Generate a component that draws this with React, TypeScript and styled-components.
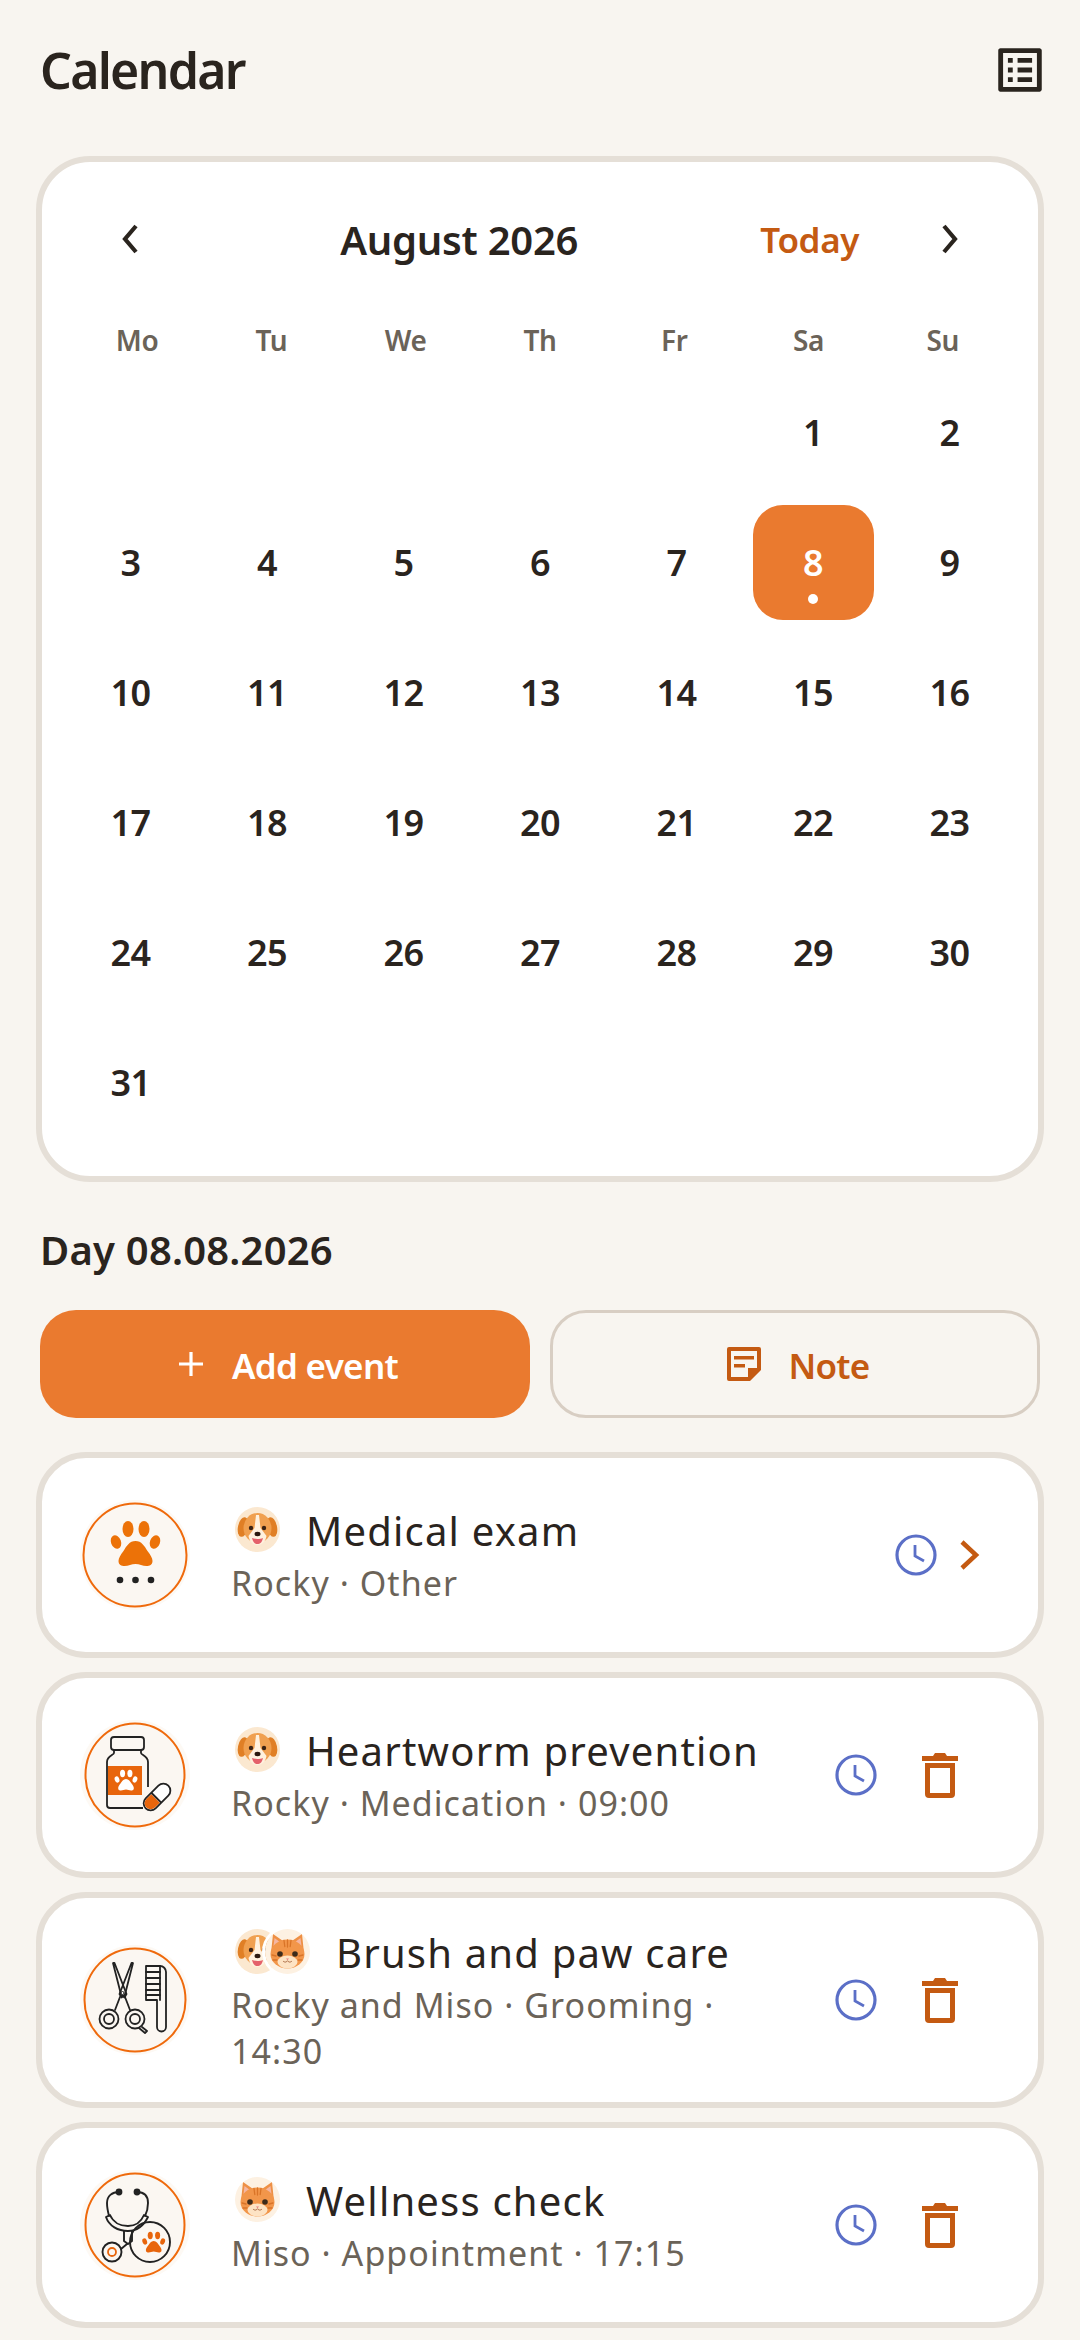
import React from 'react';
import styled, { createGlobalStyle } from 'styled-components';

const GlobalStyle = createGlobalStyle`
    html, body {
        margin: 0;
        padding: 0;
        background: #f8f5f0;
        font-family: "Noto Sans", sans-serif;
        color: #2a241e;
    }
    * {
        box-sizing: border-box;
    }
`;

const Page = styled.div`
    width: 1080px;
    height: 2340px;
    padding: 0 36px;
    overflow: hidden;
`;

const Header = styled.header`
    display: flex;
    justify-content: space-between;
    align-items: center;
    height: 140px;
    margin-bottom: 16px;
    padding: 0 0 0 4px;

    svg {
        margin-right: -5px;
    }
`;

const PageTitle = styled.h1`
    margin: 0;
    font-size: 50px;
    font-weight: 600;
    letter-spacing: -1.75px;
`;

const Card = styled.section`
    background: #fff;
    border: 6px solid #e5dfd7;
    border-radius: 54px;
    padding: 49px 28px 36px;
`;

const Nav = styled.div`
    display: flex;
    align-items: center;
    height: 56px;
    margin: 0 32px 53px;
`;

const IconButton = styled.button`
    display: flex;
    align-items: center;
    justify-content: center;
    width: 56px;
    height: 56px;
    padding: 0;
    border: 0;
    background: none;
`;

const Month = styled.div`
    flex: 1;
    text-align: center;
    font-size: 40px;
    font-weight: 600;
    letter-spacing: -0.25px;
`;

const Today = styled.span`
    margin-right: 63px;
    font-size: 35px;
    font-weight: 600;
    letter-spacing: -0.4px;
    color: #c45a12;
`;

const WeekRow = styled.div`
    display: grid;
    grid-template-columns: repeat(7, 1fr);
    height: 40px;
    margin-bottom: 15px;
`;

const WeekDay = styled.div`
    text-align: center;
    line-height: 40px;
    font-size: 28px;
    font-weight: 600;
    letter-spacing: -0.3px;
    color: #6b6358;
`;

const DayGrid = styled.div`
    display: grid;
    grid-template-columns: repeat(7, 121px);
    grid-auto-rows: 115px;
    column-gap: 15.5px;
    row-gap: 15px;
`;

const Day = styled.div<{ $selected?: boolean }>`
    position: relative;
    display: flex;
    align-items: center;
    justify-content: center;
    border-radius: 30px;
    font-size: 36px;
    font-weight: 600;
    letter-spacing: -0.5px;
    color: ${({ $selected }) => ($selected ? '#fff' : '#2a241e')};
    background: ${({ $selected }) => ($selected ? '#ea7a2f' : 'transparent')};
`;

const EventDot = styled.span`
    position: absolute;
    left: 50%;
    bottom: 16px;
    width: 10px;
    height: 10px;
    margin-left: -5px;
    border-radius: 50%;
    background: #fff;
`;

const DayHeading = styled.h2`
    margin: 38px 0 30px 4px;
    font-size: 40px;
    line-height: 60px;
    font-weight: 600;
    letter-spacing: 0.2px;
`;

const Buttons = styled.div`
    display: grid;
    grid-template-columns: 1fr 1fr;
    gap: 20px;
    margin: 0 4px 34px;
`;

const ActionButton = styled.button<{ $primary?: boolean }>`
    display: flex;
    align-items: center;
    justify-content: center;
    gap: ${({ $primary }) => ($primary ? '28px' : '26px')};
    height: 108px;
    padding: 0 0 0 6px;
    border-radius: 36px;
    font-family: inherit;
    font-size: 35px;
    font-weight: 600;
    letter-spacing: -0.7px;
    color: ${({ $primary }) => ($primary ? '#fff' : '#c45a12')};
    background: ${({ $primary }) => ($primary ? '#ea7a2f' : 'transparent')};
    border: ${({ $primary }) => ($primary ? '0' : '3px solid #d8cec3')};
`;

const ButtonLabel = styled.span`
    padding-top: 3px;
`;

const EventList = styled.div`
    display: flex;
    flex-direction: column;
    gap: 14px;
`;

const EventCard = styled.article`
    display: flex;
    align-items: center;
    min-height: 206px;
    padding: 28px 56px 28px 38px;
    background: #fff;
    border: 6px solid #e5dfd7;
    border-radius: 50px;
`;

const EventBody = styled.div`
    flex: 1;
    min-width: 0;
    margin-left: 41px;
    padding-right: 30px;
`;

const TitleRow = styled.div`
    display: flex;
    align-items: center;
    gap: 26px;
    padding-left: 4px;
`;

const Avatars = styled.div`
    display: flex;
    margin-bottom: 5px;
`;

const Avatar = styled.svg<{ $stacked?: boolean }>`
    display: block;
    width: 45px;
    height: 45px;
    border-radius: 50%;
    ${({ $stacked }) => $stacked && `
        margin-left: -15px;
        box-shadow: 0 0 0 3px #fff;
    `}
`;

const EventTitle = styled.div`
    padding-bottom: 3px;
    font-size: 40px;
    line-height: 53px;
    letter-spacing: 1.2px;
    white-space: nowrap;
    color: #2a241e;
`;

const EventMeta = styled.div`
    font-size: 34px;
    line-height: 46px;
    letter-spacing: 1.05px;
    color: #6b6358;
`;

const Actions = styled.div`
    display: flex;
    align-items: center;
    gap: 18px;
    flex-shrink: 0;
`;

const EventAction = styled.span<{ $width: number }>`
    display: flex;
    align-items: center;
    justify-content: center;
    width: ${({ $width }) => $width}px;
`;

const ORANGE = '#e8650c';
const INK = '#222';

const Paw = ({ x, y, scale = 1, fill = ORANGE }: { x: number; y: number; scale?: number; fill?: string }) => (
    <g transform={`translate(${x} ${y}) scale(${scale})`} fill={fill}>
        <ellipse cx="-7.5" cy="-25" rx="5.5" ry="8" />
        <ellipse cx="8.5" cy="-25" rx="5.5" ry="8" />
        <ellipse cx="-19.5" cy="-12" rx="5" ry="7" transform="rotate(-20 -19.5 -12)" />
        <ellipse cx="19.5" cy="-12" rx="5" ry="7" transform="rotate(20 19.5 -12)" />
        <path d="M0-13c6 0 9 5 12 10 3 4 5 7 5 10 0 4-3 5-6 5-4 0-7-2-11-2s-7 2-11 2c-3 0-6-1-6-5 0-3 2-6 5-10 3-5 6-10 12-10z" />
    </g>
);

const IconFrame = ({ children, rx = 49.5, ry = 51.5 }: { children: React.ReactNode; rx?: number; ry?: number }) => (
    <svg width="110" height="110" viewBox="0 0 110 110" style={{ flexShrink: 0 }}>
        <circle cx="55" cy="55" r="55" fill="#fdf9f4" />
        <ellipse cx="55" cy="55" rx={rx} ry={ry} fill="#fbf7f2" stroke="#ef6a0c" strokeWidth="2" />
        {children}
    </svg>
);

const OtherIcon = () => (
    <IconFrame rx={51.5}>
        <Paw x={55.5} y={54} fill="#ec7208" />
        <g fill={INK}>
            <circle cx="40" cy="80" r="3.3" />
            <circle cx="55.5" cy="80" r="3.3" />
            <circle cx="71" cy="80" r="3.3" />
        </g>
    </IconFrame>
);

const MedicationIcon = () => (
    <IconFrame>
        <g fill="none" stroke={INK} strokeWidth="1.8">
            <rect x="31" y="17" width="33" height="13" rx="3" />
            <path d="M34 30v3c0 2-7 3-7 9v43a3 3 0 0 0 3 3h33M61 30v3c0 2 7 3 7 9v25" />
        </g>
        <rect x="28" y="46" width="34" height="29" fill={ORANGE} />
        <Paw x={46} y={65} scale={0.46} fill="#fff" />
        <g transform="rotate(-45 77 77)">
            <rect x="61" y="70" width="32" height="14" rx="7" fill="#fff" stroke={INK} strokeWidth="1.8" />
            <path d="M75 71h-7a6 6 0 0 0 0 12h7z" fill={ORANGE} />
            <path d="M76 70v14" stroke={INK} strokeWidth="1.8" />
        </g>
    </IconFrame>
);

const GroomingIcon = () => (
    <IconFrame rx={50.5} ry={51.5}>
        <g fill="none" stroke={INK} strokeWidth="1.8" strokeLinejoin="round" strokeLinecap="round">
            <path d="M33 18l1.500 0 12 31 -2 3.500 -3.500 -3z" />
            <path d="M53 18l-1.500 0 -12 31 2 3.500 3.500 -3z" />
            <path d="M40 52l-5 13M45 52l5 13" />
            <circle cx="29" cy="74" r="9.500" />
            <circle cx="29" cy="74" r="5" />
            <circle cx="55" cy="74" r="9.500" />
            <circle cx="55" cy="74" r="5" />
            <path d="M59 83l6 5 2-2-5-4" />
            <path d="M66 21h14a6 6 0 0 1 6 6v55a4.500 4.500 0 0 1-9 0v-27h-11z" />
            <path d="M66 27h14M66 33h14M66 39h14M66 45h14M66 50h14" />
            <path d="M80 21v34" />
        </g>
        <circle cx="42.500" cy="48" r="1.500" fill="#fff" stroke={INK} strokeWidth="1" />
    </IconFrame>
);

const CheckupIcon = () => (
    <IconFrame>
        <g fill="none" stroke={INK} strokeWidth="1.9" strokeLinecap="round" strokeLinejoin="round">
            <path d="M39 22c-7 0-12 4-12 11 0 5 1 9 2 13" />
            <path d="M57 22c7 0 11 4 11 11 0 5-1 9-3 13" />
            <path d="M26 47c3 9 12 14 22 14s16-6 20-14l-4-2c-3 7-8 11-16 11s-15-4-18-11z" />
            <path d="M44 61v10l4 3 4-3v-10" />
            <circle cx="70" cy="72" r="20" />
            <circle cx="32" cy="82" r="9.500" />
            <path d="M41 79l6-5" />
        </g>
        <circle cx="39" cy="22" r="3.400" fill={INK} />
        <circle cx="57" cy="22" r="3.400" fill={INK} />
        <circle cx="32" cy="82" r="4" fill="none" stroke={ORANGE} strokeWidth="1.8" />
        <Paw x={73.7} y={77} scale={0.46} fill={ORANGE} />
    </IconFrame>
);

const DogAvatar = () => (
    <Avatar viewBox="0 0 45 45">
        <rect width="45" height="45" fill="#fbe8d0" />
        <ellipse cx="8" cy="20" rx="5" ry="10" fill="#e07f25" transform="rotate(12 8 20)" />
        <ellipse cx="37" cy="20" rx="5" ry="10" fill="#e07f25" transform="rotate(-12 37 20)" />
        <ellipse cx="22.500" cy="21" rx="14" ry="15" fill="#f0a050" />
        <path d="M21 8h3l1.500 13 6 8c-1 6-5 9-9 9s-8-3-9-9l6-8z" fill="#fff1de" />
        <circle cx="16" cy="21" r="2.200" fill="#3a2214" />
        <circle cx="29" cy="21" r="2.200" fill="#3a2214" />
        <ellipse cx="22.500" cy="27" rx="3" ry="2.200" fill="#2c1a10" />
        <path d="M17 31c3 1.300 8 1.300 11 0-1 4.500-3 6-5.500 6s-4.500-1.500-5.500-6z" fill="#e4616b" />
    </Avatar>
);

const CatAvatar = ({ stacked }: { stacked?: boolean }) => (
    <Avatar viewBox="0 0 45 45" $stacked={stacked}>
        <rect width="45" height="45" fill="#fdf1e2" />
        <path d="M6 24L8 5l13 9zM39 24L37 5 24 14z" fill="#ee9045" />
        <path d="M8.500 17L9.500 9l6 4.500zM36.500 17L35.500 9l-6 4.500z" fill="#f4b6a2" />
        <ellipse cx="22.500" cy="25" rx="17" ry="14.500" fill="#f2964a" />
        <ellipse cx="22.500" cy="33" rx="10" ry="6.500" fill="#fde3c4" />
        <path d="M19 11.500l.8 6M22.500 11v7M26 11.500l-.8 6M7 26l4 1M38 26l-4 1M8 31l4 0M37 31l-4 0" stroke="#d97428" strokeWidth="1.300" strokeLinecap="round" />
        <circle cx="15" cy="25" r="2.800" fill="#3d2b1a" />
        <circle cx="30" cy="25" r="2.800" fill="#3d2b1a" />
        <path d="M21 29.500h3l-1.500 1.800z" fill="#e77d80" />
        <path d="M18.500 32.500c1.500 1 3 .8 4-.8 1 1.600 2.500 1.800 4 .8" fill="none" stroke="#a2603a" strokeWidth="0.900" strokeLinecap="round" />
    </Avatar>
);

const ClockIcon = () => (
    <svg width="42" height="42" viewBox="0 0 42 42" fill="none" stroke="#5b6fc7" strokeWidth="3.200">
        <circle cx="21" cy="21" r="19" />
        <path d="M20 11v11l9 5" strokeWidth="2.800" />
    </svg>
);

const ChevronIcon = () => (
    <svg width="20" height="30" viewBox="0 0 20 30" fill="none" stroke="#c45a12" strokeWidth="4.500">
        <path d="M2 2l14 13L2 28" />
    </svg>
);

const TrashIcon = () => (
    <svg width="36" height="46" viewBox="0 0 36 46" fill="#c45a12">
        <path d="M0 4h11l2-3h10l2 3h11v5H0z" />
        <path d="M3 11h30v31a4 4 0 0 1-4 4H7a4 4 0 0 1-4-4zm5 5v25h20V16z" fillRule="evenodd" />
    </svg>
);

const NavChevron = ({ right }: { right?: boolean }) => (
    <svg width="20" height="30" viewBox="0 0 20 30" fill="none" stroke="#2a241e" strokeWidth="4.200">
        <path d={right ? 'M4 2l11 13L4 28' : 'M16 2L5 15l11 13'} />
    </svg>
);

const ListIcon = () => (
    <svg width="58" height="58" viewBox="0 0 24 24" fill="#2a241e">
        <path d="M19 5v14H5V5h14m1.100-2H3.900c-.5 0-.9.400-.9.900v16.200c0 .400.400.900.900.900h16.200c.400 0 .900-.500.900-.900V3.900c0-.500-.500-.900-.900-.900zM11 7h6v2h-6V7zm0 4h6v2h-6v-2zm0 4h6v2h-6zM7 7h2v2H7zm0 4h2v2H7zm0 4h2v2H7z" />
    </svg>
);

const PlusIcon = () => (
    <svg width="26" height="26" viewBox="0 0 26 26" stroke="#fff" strokeWidth="3.200">
        <path d="M13 1v24M1 13h24" />
    </svg>
);

const NoteIcon = () => (
    <svg width="36" height="36" viewBox="0 0 36 36" fill="#c45a12">
        <path fillRule="evenodd" d="M3 1h30a2 2 0 0 1 2 2v21L24 35H3a2 2 0 0 1-2-2V3a2 2 0 0 1 2-2zm2 4v26h17v-9h9V5z" />
        <path d="M8 10h20v3.500H8zM8 18h11v3.500H8z" />
    </svg>
);

const WEEK_DAYS = ['Mo', 'Tu', 'We', 'Th', 'Fr', 'Sa', 'Su'];
const LEADING_BLANKS = 5;
const DAYS = Array.from({ length: 31 }, (_, index) => index + 1);

const Calendar = () => (
    <Card>
        <Nav>
            <IconButton><NavChevron /></IconButton>
            <Month>August 2026</Month>
            <Today>Today</Today>
            <IconButton><NavChevron right /></IconButton>
        </Nav>
        <WeekRow>
            {WEEK_DAYS.map((day) => <WeekDay key={day}>{day}</WeekDay>)}
        </WeekRow>
        <DayGrid>
            {Array.from({ length: LEADING_BLANKS }, (_, index) => <div key={`blank-${index}`} />)}
            {DAYS.map((day) => (
                <Day key={day} $selected={day === 8}>
                    {day}
                    {day === 8 && <EventDot />}
                </Day>
            ))}
        </DayGrid>
    </Card>
);

interface EventRowProps {
    icon: React.ReactNode;
    pets: React.ReactNode;
    title: string;
    meta: string;
    editable?: boolean;
}

const EventRow = ({ icon, pets, title, meta, editable = true }: EventRowProps) => (
    <EventCard>
        {icon}
        <EventBody>
            <TitleRow>
                <Avatars>{pets}</Avatars>
                <EventTitle>{title}</EventTitle>
            </TitleRow>
            <EventMeta>{meta}</EventMeta>
        </EventBody>
        <Actions>
            <EventAction $width={48}><ClockIcon /></EventAction>
            {editable
                ? <EventAction $width={84}><TrashIcon /></EventAction>
                : <EventAction $width={24}><ChevronIcon /></EventAction>}
        </Actions>
    </EventCard>
);

export default function App() {
    return (
        <Page>
            <GlobalStyle />
            <Header>
                <PageTitle>Calendar</PageTitle>
                <ListIcon />
            </Header>
            <Calendar />
            <DayHeading>Day 08.08.2026</DayHeading>
            <Buttons>
                <ActionButton $primary><PlusIcon /><ButtonLabel>Add event</ButtonLabel></ActionButton>
                <ActionButton><NoteIcon /><ButtonLabel>Note</ButtonLabel></ActionButton>
            </Buttons>
            <EventList>
                <EventRow
                    icon={<OtherIcon />}
                    pets={<DogAvatar />}
                    title="Medical exam"
                    meta="Rocky · Other"
                    editable={false}
                />
                <EventRow
                    icon={<MedicationIcon />}
                    pets={<DogAvatar />}
                    title="Heartworm prevention"
                    meta="Rocky · Medication · 09:00"
                />
                <EventRow
                    icon={<GroomingIcon />}
                    pets={<><DogAvatar /><CatAvatar stacked /></>}
                    title="Brush and paw care"
                    meta="Rocky and Miso · Grooming · 14:30"
                />
                <EventRow
                    icon={<CheckupIcon />}
                    pets={<CatAvatar />}
                    title="Wellness check"
                    meta="Miso · Appointment · 17:15"
                />
            </EventList>
        </Page>
    );
}
